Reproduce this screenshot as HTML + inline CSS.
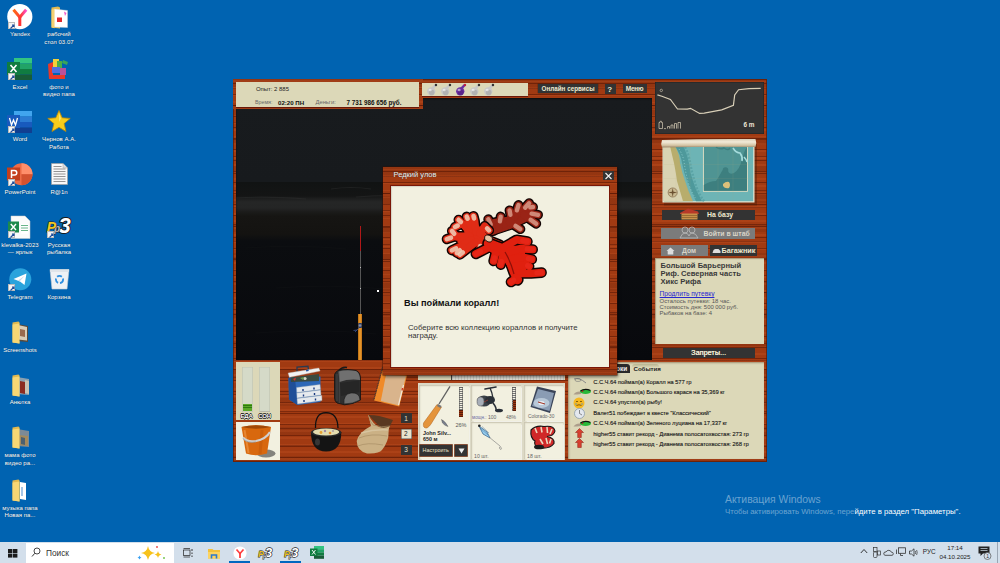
<!DOCTYPE html>
<html><head><meta charset="utf-8">
<style>
*{margin:0;padding:0;box-sizing:border-box}
html,body{width:1000px;height:563px;overflow:hidden}
body{background:#0063b1;font-family:"Liberation Sans",sans-serif;position:relative}
.a{position:absolute}
svg.a{overflow:visible}
.wood{background-color:#a13a12;background-image:repeating-linear-gradient(180deg,transparent 0 4px,rgba(75,15,0,.5) 4px 5.2px,transparent 5.2px 11px),repeating-linear-gradient(180deg,transparent 0 1.5px,rgba(235,110,55,.14) 1.5px 3.3px,transparent 3.3px 7px),repeating-linear-gradient(180deg,transparent 0 9px,rgba(60,10,0,.35) 9px 10.3px,transparent 10.3px 17px),repeating-linear-gradient(180deg,rgba(0,0,0,.08) 0 8px,transparent 8px 29px);}
.lbl{position:absolute;width:60px;text-align:center;color:#fff;font-size:6.05px;line-height:7.5px;white-space:nowrap;text-shadow:0 0 1px rgba(0,0,0,.5)}
</style></head><body>
<svg class="a" style="left:7px;top:3.5px" width="26" height="26" viewBox="0 0 26 26"><circle cx="12.8" cy="12.7" r="12.6" fill="#fff"/><defs><linearGradient id="yg" x1="0" y1="0" x2="1" y2="0"><stop offset="0" stop-color="#ff6a13"/><stop offset="0.6" stop-color="#ff3d3d"/><stop offset="1" stop-color="#ff4fd0"/></linearGradient></defs><path d="M6.5 5.8 L12.8 13.2 L19.2 5.8" stroke="url(#yg)" stroke-width="3" fill="none" stroke-linecap="butt"/><path d="M12.8 12.5 V22" stroke="#ff3535" stroke-width="3"/></svg><div class="a" style="left:7.5px;top:22px;width:7px;height:7px;background:#f4f4f4;border:0.5px solid #bbb"><svg width="7" height="7" viewBox="0 0 7 7" style="position:absolute;left:0;top:0"><path d="M1.5 5.5 L5 2 M3 2 H5 V4" stroke="#1f4e9a" stroke-width="1.1" fill="none"/></svg></div><div class="lbl" style="left:-10px;top:31.2px">Yandex</div><svg class="a" style="left:7px;top:58px" width="26" height="22" viewBox="0 0 26 22"><rect x="7" y="0" width="18" height="5.5" fill="#33c481"/><rect x="7" y="5.5" width="18" height="5.5" fill="#21a366"/><rect x="7" y="11" width="18" height="5.5" fill="#107c41"/><rect x="7" y="16.5" width="18" height="5.5" fill="#185c37"/><rect x="0" y="4" width="13" height="13" fill="#107c41"/><path d="M3.5 7 L9.5 14 M9.5 7 L3.5 14" stroke="#fff" stroke-width="1.6"/></svg><div class="a" style="left:7.5px;top:73px;width:7px;height:7px;background:#f4f4f4;border:0.5px solid #bbb"><svg width="7" height="7" viewBox="0 0 7 7" style="position:absolute;left:0;top:0"><path d="M1.5 5.5 L5 2 M3 2 H5 V4" stroke="#1f4e9a" stroke-width="1.1" fill="none"/></svg></div><div class="lbl" style="left:-10px;top:83.8px">Excel</div><svg class="a" style="left:7px;top:110.5px" width="26" height="22" viewBox="0 0 26 22"><rect x="7" y="0" width="18" height="5.5" fill="#41a5ee"/><rect x="7" y="5.5" width="18" height="5.5" fill="#2b7cd3"/><rect x="7" y="11" width="18" height="5.5" fill="#185abd"/><rect x="7" y="16.5" width="18" height="5.5" fill="#103f91"/><rect x="0" y="4" width="13" height="13" fill="#185abd"/><path d="M2.5 7 L4.5 14 L6.5 9 L8.5 14 L10.5 7" stroke="#fff" stroke-width="1.3" fill="none"/></svg><div class="a" style="left:7.5px;top:126px;width:7px;height:7px;background:#f4f4f4;border:0.5px solid #bbb"><svg width="7" height="7" viewBox="0 0 7 7" style="position:absolute;left:0;top:0"><path d="M1.5 5.5 L5 2 M3 2 H5 V4" stroke="#1f4e9a" stroke-width="1.1" fill="none"/></svg></div><div class="lbl" style="left:-10px;top:136.4px">Word</div><svg class="a" style="left:7px;top:163px" width="26" height="23" viewBox="0 0 26 23"><circle cx="14.5" cy="11.3" r="11" fill="#ed6c47"/><path d="M14.5 0.3 A11 11 0 0 1 25.5 11.3 H14.5Z" fill="#ff8f6b"/><path d="M14.5 11.3 H25.5 A11 11 0 0 1 14.5 22.3Z" fill="#d35230"/><rect x="0" y="4.5" width="13" height="13" fill="#c43e1c"/><path d="M4.5 15 V7.5 H7.5 A2.2 2.2 0 0 1 7.5 12 H4.5" stroke="#fff" stroke-width="1.5" fill="none"/></svg><div class="a" style="left:7.5px;top:179px;width:7px;height:7px;background:#f4f4f4;border:0.5px solid #bbb"><svg width="7" height="7" viewBox="0 0 7 7" style="position:absolute;left:0;top:0"><path d="M1.5 5.5 L5 2 M3 2 H5 V4" stroke="#1f4e9a" stroke-width="1.1" fill="none"/></svg></div><div class="lbl" style="left:-10px;top:189.0px">PowerPoint</div><svg class="a" style="left:7px;top:215.5px" width="26" height="23" viewBox="0 0 26 23"><path d="M4 0 H18 L23 5 V22.5 H4 Z" fill="#fbfbfb" stroke="#c8c8c8" stroke-width="0.5"/><rect x="14" y="8" width="7" height="10" fill="#fff"/><path d="M14 9.5 H21 M14 12 H21 M14 14.5 H21" stroke="#6ab48a" stroke-width="1"/><rect x="1" y="5.5" width="11" height="11" fill="#1d8a4b"/><path d="M3.8 8 L9 14 M9 8 L3.8 14" stroke="#fff" stroke-width="1.4"/></svg><div class="a" style="left:7.5px;top:231px;width:7px;height:7px;background:#f4f4f4;border:0.5px solid #bbb"><svg width="7" height="7" viewBox="0 0 7 7" style="position:absolute;left:0;top:0"><path d="M1.5 5.5 L5 2 M3 2 H5 V4" stroke="#1f4e9a" stroke-width="1.1" fill="none"/></svg></div><div class="lbl" style="left:-10px;top:241.6px">klevalka-2023</div><div class="lbl" style="left:-10px;top:249.1px">— ярлык</div><svg class="a" style="left:9px;top:268px" width="23" height="23" viewBox="0 0 23 23"><circle cx="11.3" cy="11.3" r="11" fill="#2aa3dc"/><path d="M4.5 11 L17.5 5.5 L15.5 17 L11 13.5 Z" fill="#fff"/><path d="M9 12.5 L16 7.5 L10.5 13.5 Z" fill="#c8daea"/></svg><div class="a" style="left:7.5px;top:284px;width:7px;height:7px;background:#f4f4f4;border:0.5px solid #bbb"><svg width="7" height="7" viewBox="0 0 7 7" style="position:absolute;left:0;top:0"><path d="M1.5 5.5 L5 2 M3 2 H5 V4" stroke="#1f4e9a" stroke-width="1.1" fill="none"/></svg></div><div class="lbl" style="left:-10px;top:294.2px">Telegram</div><svg class="a" style="left:11.5px;top:321px" width="18" height="23" viewBox="0 0 18 23"><path d="M0.5 1.5 L6.5 0.5 L7.5 1.5 L7.5 22.5 L0.5 21.5 Z" fill="#e2b94f"/><path d="M5 3 L16 5 L16 21 L5 20Z" fill="#5b4a3a"/><path d="M6 4 L15 6 L15 19.5 L6 18.5Z" fill="#d9cdb8"/><path d="M8 8 L13 9 L13 16 L8 15Z" fill="#9a6a4e"/><path d="M0.5 21.5 L7.5 22.5 L7.5 2.5 L0.5 3.5 Z" fill="#f7d774"/></svg><div class="lbl" style="left:-10px;top:346.8px">Screenshots</div><svg class="a" style="left:11.5px;top:373.5px" width="18" height="23" viewBox="0 0 18 23"><path d="M0.5 1.5 L6.5 0.5 L7.5 1.5 L7.5 22.5 L0.5 21.5 Z" fill="#e2b94f"/><path d="M5 3 L17 5 L17 21 L5 20Z" fill="#8aa0b0"/><path d="M8 7 L13 8 L13 20 L8 19Z" fill="#8b2b22"/><path d="M13 6 L17 7 L17 20 L13 19Z" fill="#c9c2b4"/><path d="M0.5 21.5 L7.5 22.5 L7.5 2.5 L0.5 3.5 Z" fill="#f7d774"/></svg><div class="lbl" style="left:-10px;top:399.4px">Анютка</div><svg class="a" style="left:11.5px;top:426px" width="18" height="23" viewBox="0 0 18 23"><path d="M0.5 1.5 L6.5 0.5 L7.5 1.5 L7.5 22.5 L0.5 21.5 Z" fill="#e2b94f"/><path d="M5 3 L17 5 L17 21 L5 20Z" fill="#7d8a96"/><path d="M6 9 L16 10 L16 20 L6 19Z" fill="#a58a5c"/><path d="M9 11 L13 12 L13 19 L9 18Z" fill="#4c6070"/><path d="M0.5 21.5 L7.5 22.5 L7.5 2.5 L0.5 3.5 Z" fill="#f7d774"/></svg><div class="lbl" style="left:-10px;top:452.0px">мама фото</div><div class="lbl" style="left:-10px;top:459.5px">видео ра...</div><svg class="a" style="left:11.5px;top:479px" width="18" height="23" viewBox="0 0 18 23"><path d="M0.5 1.5 L6.5 0.5 L7.5 1.5 L7.5 22.5 L0.5 21.5 Z" fill="#e2b94f"/><path d="M8 3 L14 4 L14 21 L8 20Z" fill="#fff"/><path d="M10 8 V17" stroke="#6aa0d8" stroke-width="1.2"/><path d="M0.5 21.5 L7.5 22.5 L7.5 2.5 L0.5 3.5 Z" fill="#f7d774"/></svg><div class="lbl" style="left:-10px;top:504.6px">музыка папа</div><div class="lbl" style="left:-10px;top:512.1px">Новая па...</div><svg class="a" style="left:51px;top:5.5px" width="18" height="23" viewBox="0 0 18 23"><path d="M0.5 1.5 L7 0.5 L9 1.5 L9 22.5 L0.5 21.5 Z" fill="#e2b94f"/><path d="M3 3 L16.5 4.5 L16.5 21.5 L3 21Z" fill="#fff" stroke="#d8d8d8" stroke-width="0.4"/><rect x="6" y="11.5" width="5" height="4.5" fill="#e0282e"/><path d="M13 5.5 L15.5 7 L14 10Z" fill="#f05ac8"/><path d="M0.5 21.5 L3.5 22.3 L3.5 3 L0.5 3.5 Z" fill="#f4d070"/></svg><div class="lbl" style="left:29px;top:31.2px">рабочий</div><div class="lbl" style="left:29px;top:38.7px">стол 03.07</div><svg class="a" style="left:47px;top:58px" width="24" height="22" viewBox="0 0 24 22"><path d="M1 6 L6 4 L6 17 L18 17 L18 21 L2 21Z" fill="#e8392a"/><rect x="6" y="1" width="6" height="8" fill="#f2d23a"/><rect x="10" y="3" width="5" height="7" fill="#4aae48"/><rect x="5" y="9" width="8" height="6" fill="#4f6fe0"/><rect x="13" y="10" width="6" height="7" fill="#b9519b"/><path d="M16 2 L21 4 L20 7 L15 5Z" fill="#39a55a"/></svg><div class="lbl" style="left:29px;top:83.8px">фото и</div><div class="lbl" style="left:29px;top:91.3px">видео папа</div><svg class="a" style="left:47px;top:110px" width="24" height="23" viewBox="0 0 24 23"><path d="M12 0.5 L15.2 7.8 L23.2 8.4 L17.1 13.6 L19 21.5 L12 17.3 L5 21.5 L6.9 13.6 L0.8 8.4 L8.8 7.8Z" fill="#f7cd1c" stroke="#b8860b" stroke-width="0.8"/><path d="M12 3 L14 8.5 L12 12 Z" fill="#fff3a0" opacity="0.6"/></svg><div class="lbl" style="left:29px;top:136.4px">Чернов А.А.</div><div class="lbl" style="left:29px;top:143.9px">Работа</div><svg class="a" style="left:51px;top:163px" width="17" height="22" viewBox="0 0 17 22"><path d="M0.5 0.5 H12 L16.5 5 V21.5 H0.5Z" fill="#f8f8f8" stroke="#a0a0a0" stroke-width="0.7"/><path d="M12 0.5 V5 H16.5" fill="#ddd" stroke="#a0a0a0" stroke-width="0.5"/><path d="M2.5 3.5 H10.5 M2.5 6 H14.5 M2.5 8.5 H14.5 M2.5 11 H14.5 M2.5 13.5 H14.5 M2.5 16 H14.5 M2.5 18.5 H14.5" stroke="#888" stroke-width="0.9"/></svg><div class="lbl" style="left:29px;top:189.0px">R@1n</div><svg class="a" style="left:46px;top:214px" width="27" height="25" viewBox="0 0 27 25"><text x="18.5" y="19" text-anchor="middle" font-family="Liberation Sans" font-weight="bold" font-style="italic" font-size="22" fill="#fff" stroke="#1a1a1a" stroke-width="2" paint-order="stroke">3</text><text x="8" y="18" font-family="Liberation Sans" font-weight="bold" font-style="italic" font-size="10" fill="#bdbdbd" stroke="#222" stroke-width="1" paint-order="stroke">р</text><text x="0.8" y="18" font-family="Liberation Sans" font-weight="bold" font-style="italic" font-size="14" fill="#f0c820" stroke="#222" stroke-width="1" paint-order="stroke">Р</text></svg><div class="a" style="left:47px;top:231px;width:7px;height:7px;background:#f4f4f4;border:0.5px solid #bbb"><svg width="7" height="7" viewBox="0 0 7 7" style="position:absolute;left:0;top:0"><path d="M1.5 5.5 L5 2 M3 2 H5 V4" stroke="#1f4e9a" stroke-width="1.1" fill="none"/></svg></div><div class="lbl" style="left:29px;top:241.6px">Русская</div><div class="lbl" style="left:29px;top:249.1px">рыбалка</div><svg class="a" style="left:49px;top:268px" width="21" height="22" viewBox="0 0 21 22"><path d="M1 1.5 H20 L18 21 H3Z" fill="#eef2f5" stroke="#c5cdd4" stroke-width="0.6"/><path d="M1 1.5 H20 L19.7 4 H1.3Z" fill="#dfe5ea"/><circle cx="10.5" cy="11.5" r="3.6" fill="none" stroke="#2d8fe0" stroke-width="1.8" stroke-dasharray="5 2"/></svg><div class="lbl" style="left:29px;top:294.2px">Корзина</div><div class="a" style="left:0;top:542px;width:1000px;height:21px;background:#d3dfeb"></div><svg class="a" style="left:8px;top:548.5px" width="10" height="9" viewBox="0 0 10 9"><rect x="0" y="0" width="4.4" height="4" fill="#1b1b1b"/><rect x="5" y="0" width="4.4" height="4" fill="#1b1b1b"/><rect x="0" y="4.6" width="4.4" height="4" fill="#1b1b1b"/><rect x="5" y="4.6" width="4.4" height="4" fill="#1b1b1b"/></svg><div class="a" style="left:26px;top:542.5px;width:148px;height:20.5px;background:#fff"></div><svg class="a" style="left:31px;top:547px" width="10" height="11" viewBox="0 0 10 11"><circle cx="6" cy="4" r="3" fill="none" stroke="#333" stroke-width="0.9"/><path d="M3.8 6.3 L1 9.5" stroke="#333" stroke-width="1"/></svg><div class="a" style="left:46px;top:547.5px;font-size:8.3px;line-height:10px;color:#333">Поиск</div><svg class="a" style="left:137px;top:544px" width="34" height="18" viewBox="0 0 34 18"><path d="M11 2 Q12 8 18 9 Q12 10 11 16 Q10 10 4 9 Q10 8 11 2Z" fill="#f7c21c"/><path d="M21 7 Q21.5 10 24.5 10.5 Q21.5 11 21 14 Q20.5 11 17.5 10.5 Q20.5 10 21 7Z" fill="#f7c21c"/><path d="M2.5 11.5 Q3 13.3 4.5 13.5 Q3 13.8 2.5 15.5 Q2 13.8 0.5 13.5 Q2 13.3 2.5 11.5Z" fill="#3aa0f0"/><circle cx="20" cy="3" r="0.9" fill="#e84040"/><circle cx="27" cy="14" r="0.9" fill="#6cc040"/></svg><svg class="a" style="left:182.5px;top:548px" width="10" height="10" viewBox="0 0 10 10"><rect x="0.5" y="2" width="6.5" height="5.5" fill="none" stroke="#222" stroke-width="0.7"/><path d="M0.5 0.5 H7 M0.5 9 H7" stroke="#222" stroke-width="0.7"/><path d="M9 1 V3 M9 4.5 V6 M9 7.5 V9" stroke="#222" stroke-width="0.9"/></svg><svg class="a" style="left:208px;top:547.5px" width="12" height="11" viewBox="0 0 12 11"><path d="M0 1 H4.5 L5.5 2 H12 V10.5 H0Z" fill="#f3c13a"/><rect x="0" y="4" width="12" height="6.5" fill="#fcd462"/><path d="M3.5 10.5 V7 H8.5 V10.5" stroke="#2a78d0" stroke-width="1.6" fill="none"/></svg><svg class="a" style="left:233px;top:545.5px" width="14" height="14" viewBox="0 0 14 14"><circle cx="7" cy="7" r="6.6" fill="#fff"/><path d="M3.5 3.5 L7 7.5 L10.5 3.5" stroke="#ff4040" stroke-width="1.7" fill="none"/><path d="M7 7 V12" stroke="#ff3535" stroke-width="1.7"/></svg><div class="a" style="left:229px;top:561px;width:21px;height:2px;background:#0067c0"></div><svg class="a" style="left:258px;top:545px" width="16" height="14" viewBox="0 0 16 14"><text x="10.5" y="11.5" text-anchor="middle" font-family="Liberation Sans" font-weight="bold" font-style="italic" font-size="13" fill="#fff" stroke="#222" stroke-width="1.3" paint-order="stroke">3</text><text x="5" y="11.5" font-family="Liberation Sans" font-weight="bold" font-style="italic" font-size="6.5" fill="#c8c8c8" stroke="#222" stroke-width="0.8" paint-order="stroke">р</text><text x="0.3" y="11.5" font-family="Liberation Sans" font-weight="bold" font-style="italic" font-size="8.5" fill="#e8c020" stroke="#222" stroke-width="0.8" paint-order="stroke">Р</text></svg><svg class="a" style="left:283.5px;top:545px" width="16" height="14" viewBox="0 0 16 14"><text x="10.5" y="11.5" text-anchor="middle" font-family="Liberation Sans" font-weight="bold" font-style="italic" font-size="13" fill="#fff" stroke="#222" stroke-width="1.3" paint-order="stroke">3</text><text x="5" y="11.5" font-family="Liberation Sans" font-weight="bold" font-style="italic" font-size="6.5" fill="#c8c8c8" stroke="#222" stroke-width="0.8" paint-order="stroke">р</text><text x="0.3" y="11.5" font-family="Liberation Sans" font-weight="bold" font-style="italic" font-size="8.5" fill="#e8c020" stroke="#222" stroke-width="0.8" paint-order="stroke">Р</text></svg><div class="a" style="left:280px;top:561px;width:21px;height:2px;background:#0067c0"></div><svg class="a" style="left:309.5px;top:546px" width="14" height="13" viewBox="0 0 14 13"><rect x="4" y="0" width="10" height="3.2" fill="#33c481"/><rect x="4" y="3.2" width="10" height="3.2" fill="#21a366"/><rect x="4" y="6.4" width="10" height="3.2" fill="#107c41"/><rect x="4" y="9.6" width="10" height="3.2" fill="#185c37"/><rect x="0" y="2.5" width="7.5" height="7.5" fill="#107c41"/><path d="M2 4 L5.5 8.5 M5.5 4 L2 8.5" stroke="#fff" stroke-width="0.9"/></svg><svg class="a" style="left:859.5px;top:548px" width="8" height="6" viewBox="0 0 8 6"><path d="M0.8 5 L4 1.5 L7.2 5" stroke="#222" stroke-width="0.9" fill="none"/></svg><svg class="a" style="left:872.5px;top:546.5px" width="8" height="12" viewBox="0 0 8 12"><rect x="0.5" y="0.5" width="3.5" height="4" fill="none" stroke="#333" stroke-width="0.7"/><rect x="0.5" y="5" width="3.5" height="5.5" rx="1" fill="none" stroke="#333" stroke-width="0.7"/><rect x="4.5" y="4" width="3" height="4" fill="none" stroke="#333" stroke-width="0.7"/></svg><svg class="a" style="left:884px;top:548.5px" width="9" height="7" viewBox="0 0 9 7"><path d="M1 6.3 H8 A1.5 1.5 0 0 0 7.5 3.3 A3 3 0 0 0 2 3 A1.7 1.7 0 0 0 1 6.3Z" fill="none" stroke="#333" stroke-width="0.8"/></svg><svg class="a" style="left:896px;top:547px" width="10" height="10" viewBox="0 0 10 10"><rect x="2.5" y="0.8" width="7" height="5.5" fill="none" stroke="#333" stroke-width="0.8"/><path d="M0.5 2.5 V7 M4.5 6.5 V8.5 H7" stroke="#333" stroke-width="0.8" fill="none"/></svg><svg class="a" style="left:909px;top:547.5px" width="9" height="9" viewBox="0 0 9 9"><path d="M0.5 3 H2.5 L5 0.8 V8.2 L2.5 6 H0.5Z" fill="none" stroke="#333" stroke-width="0.8"/><path d="M6.3 3 Q7 4.5 6.3 6 M7.6 2 Q8.8 4.5 7.6 7" stroke="#333" stroke-width="0.7" fill="none"/></svg><div class="a" style="left:922.8px;top:548.2px;font-size:6.4px;line-height:8px;color:#222">РУС</div><div class="a" style="left:938px;top:544.3px;width:34px;text-align:center;font-size:6.2px;line-height:8.8px;color:#222">17:14<br>04.10.2025</div><svg class="a" style="left:978px;top:546px" width="14" height="14" viewBox="0 0 14 14"><path d="M0.5 0.5 H11.5 V7.5 H5 L2.5 10 V7.5 H0.5Z" fill="#222"/><path d="M2.5 2.5 H9.5 M2.5 4.5 H9.5" stroke="#d3dfeb" stroke-width="0.7"/><circle cx="9.5" cy="10" r="3.5" fill="#d3dfeb" stroke="#555" stroke-width="0.7"/><text x="8.3" y="12" font-size="5" font-family="Liberation Sans" fill="#333">1</text></svg><div class="a" style="left:997px;top:542px;width:1px;height:21px;background:#9aa6b4"></div><div class="a" style="left:725px;top:493.5px;font-size:10.4px;line-height:12px;color:rgba(255,255,255,.42);white-space:nowrap">Активация Windows</div><div class="a" style="left:725px;top:506.5px;font-size:7.8px;line-height:9px;color:rgba(255,255,255,.42);white-space:nowrap">Чтобы активировать Windows, пере<span style="color:#fff">йдите в раздел "Параметры".</span></div><div class="a wood" style="left:233px;top:79px;width:534px;height:383px;"></div><div class="a " style="left:233px;top:79px;width:534px;height:383px;box-shadow:inset 0 0 0 1px rgba(90,25,5,.7)"></div><div class="a " style="left:236px;top:98px;width:416px;height:262px;background:linear-gradient(180deg,#181b1e 0px,#171a1d 84px,#111313 84.5px,#141515 98px,#1e1f1f 101px,#252626 104px,#242525 110px,#1b1b1a 114px,#161513 118px,#141311 136px,#0b0d10 143px,#08090d 262px)"></div><svg class="a" style="left:236px;top:98px" width="416" height="262" viewBox="0 0 416 262"><g fill="none" stroke="#333434" stroke-width="1.2" opacity="0.4"><path d="M95 91 Q115 88 135 91"/><path d="M250 90 Q270 87 300 90"/><path d="M320 89 Q340 87 370 90"/><path d="M0 100 Q30 98 70 101"/><path d="M120 99 Q160 96 210 100"/><path d="M260 98 Q300 95 360 99"/></g><g fill="none" stroke="#141618" stroke-width="1" opacity="0.35"><path d="M10 150 Q60 146 110 151"/><path d="M150 165 Q200 160 260 166"/><path d="M40 190 Q90 186 150 191"/><path d="M200 210 Q260 205 320 211"/><path d="M20 235 Q80 230 140 236"/></g></svg><div class="a " style="left:236px;top:98px;width:416px;height:262px;box-shadow:inset 0 1px 2px rgba(0,0,0,.6)"></div><div class="a " style="left:359.5px;top:225.5px;width:1.6px;height:26px;background:#b01818"></div><div class="a " style="left:359.7px;top:251px;width:1.1px;height:64px;background:#555"></div><div class="a " style="left:359.8px;top:267px;width:1px;height:1px;background:#bbb"></div><div class="a " style="left:359.8px;top:288px;width:1px;height:1px;background:#bbb"></div><div class="a " style="left:358.2px;top:314px;width:3.8px;height:46px;background:linear-gradient(90deg,#b86a10,#f0a030,#c07018)"></div><svg class="a" style="left:352px;top:320px" width="14" height="16" viewBox="0 0 14 16"><rect x="6.3" y="3" width="3.5" height="5" fill="#2a3a60"/><circle cx="8" cy="5.5" r="1.3" fill="#8090b0"/><path d="M7 8 L3 12 M5 10 L1.5 10.5" stroke="#3a5090" stroke-width="0.8"/></svg><div class="a " style="left:377px;top:289.5px;width:2px;height:2px;background:#fff"></div><div class="a wood" style="left:233px;top:79px;width:189.5px;height:30.3px;"></div><div class="a " style="left:236px;top:82px;width:183px;height:24.5px;background:#dcd8b8;box-shadow:0 1px 0 #6a1808"></div><div class="a" style="left:256px;top:85.5px;white-space:nowrap;font-size:5.95px;line-height:7px;color:#222">Опыт: 2 885</div><div class="a" style="left:255px;top:99px;white-space:nowrap;font-size:5.3px;line-height:7px;color:#666">Время:</div><div class="a" style="left:278px;top:98.5px;white-space:nowrap;font-size:6.1px;line-height:7px;color:#111;font-weight:bold">02:20 ПН</div><div class="a" style="left:315.5px;top:99px;white-space:nowrap;font-size:5.8px;line-height:7px;color:#666">Деньги:</div><div class="a" style="left:346.5px;top:98.5px;white-space:nowrap;font-size:6.3px;line-height:7px;color:#111;font-weight:bold">7 731 986 656 руб.</div><div class="a " style="left:422px;top:82.5px;width:106px;height:13.5px;background:#dcd8b8;box-shadow:0 1px 0 #6a1808"></div><svg class="a" style="left:425.5px;top:83px" width="12.5" height="13.5" viewBox="0 0 11 12"><path d="M5.5 5 L8.3 2" stroke="#c8c8c8" stroke-width="2.2" stroke-linecap="round"/><circle cx="4.6" cy="7.4" r="3.7" fill="#c8c8c8"/><circle cx="5" cy="8.4" r="2.5" fill="#8a8a8a" opacity="0.35"/><circle cx="8.8" cy="1.7" r="1.1" fill="#333"/><ellipse cx="3.6" cy="6.2" rx="1.4" ry="1.1" fill="#fff" opacity="0.55"/></svg><svg class="a" style="left:440.0px;top:83px" width="12.5" height="13.5" viewBox="0 0 11 12"><path d="M5.5 5 L8.3 2" stroke="#c8c8c8" stroke-width="2.2" stroke-linecap="round"/><circle cx="4.6" cy="7.4" r="3.7" fill="#c8c8c8"/><circle cx="5" cy="8.4" r="2.5" fill="#8a8a8a" opacity="0.35"/><circle cx="8.8" cy="1.7" r="1.1" fill="#333"/><ellipse cx="3.6" cy="6.2" rx="1.4" ry="1.1" fill="#fff" opacity="0.55"/></svg><svg class="a" style="left:454.5px;top:83px" width="12.5" height="13.5" viewBox="0 0 11 12"><path d="M5.5 5 L8.3 2" stroke="#6a2fa0" stroke-width="2.2" stroke-linecap="round"/><circle cx="4.6" cy="7.4" r="3.7" fill="#6a2fa0"/><circle cx="5" cy="8.4" r="2.5" fill="#3a1060" opacity="0.35"/><circle cx="8.8" cy="1.7" r="1.1" fill="#c02040"/><ellipse cx="3.6" cy="6.2" rx="1.4" ry="1.1" fill="#fff" opacity="0.55"/></svg><svg class="a" style="left:468.5px;top:83px" width="12.5" height="13.5" viewBox="0 0 11 12"><path d="M5.5 5 L8.3 2" stroke="#c8c8c8" stroke-width="2.2" stroke-linecap="round"/><circle cx="4.6" cy="7.4" r="3.7" fill="#c8c8c8"/><circle cx="5" cy="8.4" r="2.5" fill="#8a8a8a" opacity="0.35"/><circle cx="8.8" cy="1.7" r="1.1" fill="#333"/><ellipse cx="3.6" cy="6.2" rx="1.4" ry="1.1" fill="#fff" opacity="0.55"/></svg><svg class="a" style="left:482.5px;top:83px" width="12.5" height="13.5" viewBox="0 0 11 12"><path d="M5.5 5 L8.3 2" stroke="#c8c8c8" stroke-width="2.2" stroke-linecap="round"/><circle cx="4.6" cy="7.4" r="3.7" fill="#c8c8c8"/><circle cx="5" cy="8.4" r="2.5" fill="#8a8a8a" opacity="0.35"/><circle cx="8.8" cy="1.7" r="1.1" fill="#333"/><ellipse cx="3.6" cy="6.2" rx="1.4" ry="1.1" fill="#fff" opacity="0.55"/></svg><div class="a " style="left:538px;top:83.5px;width:60px;height:9.5px;background:#333;box-shadow:0 0 1px #111"></div><div class="a" style="left:541.5px;top:84.5px;white-space:nowrap;font-size:6.3px;line-height:8px;color:#f0ead0;font-weight:bold">Онлайн сервисы</div><div class="a " style="left:604.5px;top:84px;width:11px;height:9.5px;background:#333"></div><div class="a" style="left:607.3px;top:84.5px;white-space:nowrap;font-size:8px;line-height:9px;color:#f0ead0;font-weight:bold">?</div><div class="a " style="left:623px;top:83.5px;width:23.5px;height:9.5px;background:#333"></div><div class="a" style="left:625.8px;top:84.5px;white-space:nowrap;font-size:6.5px;line-height:8px;color:#f0ead0;font-weight:bold;letter-spacing:-0.25px">Меню</div><div class="a " style="left:655px;top:82px;width:109px;height:52px;background:#333;box-shadow:inset 0 0 0 0.5px #222"></div><svg class="a" style="left:655px;top:82px" width="109" height="52" viewBox="655 82 109 52"><polyline points="657.4,94.9 661.9,96.2 670.4,99.5 672.3,102 677.5,109 687.3,109.2 690.5,108.3 699.6,113.4 704.2,113.1 721.7,109.9 733.4,105.3 734.7,94.9 738.6,89.7 749,88.7 760.7,88.4" fill="none" stroke="#d8cfb8" stroke-width="1.2"/><circle cx="661.3" cy="90.4" r="1.2" fill="none" stroke="#d8cfb8" stroke-width="0.6"/><path d="M659 128.5 V122.5 H660 V121.3 H661.5 V122.5 H662.5 V128.5Z" fill="none" stroke="#d8cfb8" stroke-width="0.7"/><path d="M664 128.6 H666 M667.5 128.6 V126.5 H669.5 V128.6 M671 128.6 V125 H673 V128.6 M674.5 128.6 V123.5 H676.5 V128.6 M678 128.6 V122.5 H680.5 V128.6" fill="none" stroke="#d8cfb8" stroke-width="0.7"/><text x="743.5" y="126.5" font-family="Liberation Sans" font-weight="bold" font-size="6.4" fill="#f0e8d8">6 m</text></svg><svg class="a" style="left:658px;top:135px" width="102" height="72" viewBox="0 0 102 72"><rect x="5" y="7" width="93" height="62" fill="#3a1a08" opacity="0.35" transform="translate(1 1.5)"/><rect x="4.5" y="9" width="92" height="58.5" fill="#ede8d2"/><rect x="5.8" y="11" width="89.5" height="55.3" fill="#6db4b5"/><path d="M5.8 11 H17 Q22 20 22 28 Q24 38 27 46 Q30 56 35 66.3 H5.8Z" fill="#b8ad6c"/><path d="M5.8 11 H12 Q14 20 16 28 Q18 38 19 46 Q22 56 25 66.3 H5.8Z" fill="#d9d3b2"/><path d="M17 11 Q23 20 24 28 Q26 38 29 46 Q33 56 38 66.3 H44 Q38 56 35 46 Q32 38 31 28 Q29 18 25 11Z" fill="#4e999b"/><path d="M27 12 Q31 20 32 28 Q34 38 37 48 Q40 58 46 66.3" stroke="#5aa4a6" stroke-width="2.5" fill="none" stroke-dasharray="2 1.5"/><path d="M21 14 Q26 22 26.5 30 Q28 40 31 50 Q34 58 38 64" stroke="#9ad6d6" stroke-width="0.8" fill="none" stroke-dasharray="1 2"/><rect x="45.4" y="11" width="44" height="45.3" fill="#4f9493" stroke="#e6e0c4" stroke-width="0.9"/><path d="M45.8 55.8 V50 Q52 46 58 46 Q62 40 64 36 Q67 32 70 36 Q71 40 76 38 Q82 34 84 24 Q86 16 89 12 V55.8Z" fill="#3d7f7f"/><circle cx="67.5" cy="35" r="2.8" fill="#3d7f7f"/><path d="M65 49 Q68 46 71 47 Q73 50 71 53 Q67 54 65 51Z" fill="#dcc07a"/><path d="M75 13 Q78 18 82 18 Q85 22 84 26 M86 22 Q88 24 89 27" stroke="#a6dcdc" stroke-width="1.6" fill="none"/><path d="M58 12 Q62 15 66 13 Q70 16 72 13" stroke="#3d7f7f" stroke-width="1.5" fill="none"/><g stroke="#b9b080" stroke-width="0.3" opacity="0.35"><path d="M5.8 29.5 H95.3 M5.8 43.5 H95.3 M60 11 V66.3 M75 11 V66.3 M18 11 V66.3 M32 11 V66.3"/></g><circle cx="14.7" cy="57.5" r="4.6" fill="#c8b890" stroke="#7a6040" stroke-width="0.6"/><path d="M14.7 53 L15.6 57.5 L14.7 62 L13.8 57.5Z M10.2 57.5 L14.7 56.6 L19.2 57.5 L14.7 58.4Z" fill="#6a5030"/><defs><linearGradient id="roll" x1="0" y1="0" x2="0" y2="1"><stop offset="0" stop-color="#d8ccb4"/><stop offset="0.35" stop-color="#f2ead8"/><stop offset="0.75" stop-color="#d4c4a4"/><stop offset="1" stop-color="#9a8468"/></linearGradient></defs><path d="M4 5 Q50 3.5 97.5 4 Q99 8 97.5 12 Q50 11.5 4 12.5 Q2.5 8.5 4 5Z" fill="url(#roll)"/></svg><div class="a " style="left:662px;top:209.8px;width:93px;height:9.8px;background:#333"></div><svg class="a" style="left:679px;top:208px" width="21" height="12" viewBox="0 0 21 12"><path d="M1 5 L9 0.5 L19 3.5 L20 6 H1Z" fill="#b83828"/><rect x="2.5" y="5.5" width="16" height="6" fill="#c8904a"/><path d="M2.5 7.5 H18.5 M2.5 9.5 H18.5" stroke="#7a5020" stroke-width="0.6"/></svg><div class="a" style="left:707px;top:211px;white-space:nowrap;font-size:6.9px;line-height:8px;color:#f0ead0;font-weight:bold">На базу</div><div class="a " style="left:661px;top:227.7px;width:94px;height:11px;background:#7b7b7b"></div><svg class="a" style="left:679px;top:226px" width="20" height="13" viewBox="0 0 20 13"><circle cx="6" cy="4" r="3" fill="none" stroke="#bbb" stroke-width="0.8"/><circle cx="13" cy="4" r="3" fill="none" stroke="#bbb" stroke-width="0.8"/><path d="M1 12 Q3 7 6 7 Q9 7 10 10 Q11 7 13 7 Q17 7 19 12Z" fill="none" stroke="#bbb" stroke-width="0.8"/></svg><div class="a" style="left:703.5px;top:229.5px;white-space:nowrap;font-size:6.9px;line-height:8px;color:#d8d4c8;font-weight:bold">Войти в штаб</div><div class="a " style="left:660.8px;top:245px;width:47.2px;height:10.7px;background:#7b7b7b"></div><svg class="a" style="left:666px;top:246.5px" width="9" height="8" viewBox="0 0 9 8"><path d="M0.5 4 L4.5 0.5 L8.5 4 H7.3 V7.5 H1.7 V4Z" fill="#ddd"/></svg><div class="a" style="left:682px;top:247px;white-space:nowrap;font-size:6.8px;line-height:8px;color:#d8d4c8;font-weight:bold">Дом</div><div class="a " style="left:710.4px;top:245px;width:46.8px;height:10.7px;background:#333"></div><svg class="a" style="left:712px;top:247.5px" width="9" height="6" viewBox="0 0 9 6"><path d="M0.5 5 L1.5 2 L3 1 H6.5 L8.5 3 V5Z" fill="#ddd"/></svg><div class="a" style="left:721.4px;top:247px;white-space:nowrap;font-size:7.3px;line-height:8px;color:#f0ead0;font-weight:bold">Багажник</div><div class="a " style="left:655px;top:258px;width:109px;height:85.5px;background:#dcd8b8;box-shadow:inset 1px 1px 1px rgba(80,40,10,.35)"></div><div class="a" style="left:660.5px;top:261.5px;white-space:nowrap;font-size:7.6px;line-height:8.1px;color:#3a3a3a;font-weight:bold">Большой Барьерный<br>Риф. Северная часть<br>Хикс Рифа</div><div class="a" style="left:659.6px;top:290.3px;white-space:nowrap;font-size:6.6px;line-height:7px;color:#2828d0;text-decoration:underline">Продлить путевку</div><div class="a" style="left:659.6px;top:297.6px;white-space:nowrap;font-size:5.9px;line-height:6.05px;color:#555">Осталось путевки: 18 час.<br>Стоимость дня: 500 000 руб.<br>Рыбаков на базе: 4</div><div class="a " style="left:662.6px;top:348px;width:92.3px;height:9.7px;background:#333"></div><div class="a" style="left:691px;top:349.2px;white-space:nowrap;font-size:7.3px;line-height:8px;color:#f4eed8;text-shadow:0.3px 0 0 #f4eed8">Запреты...</div><div class="a " style="left:236px;top:362.2px;width:43.8px;height:57.5px;background:#dcd8b8"></div><div class="a " style="left:242.2px;top:367.3px;width:10.5px;height:44.7px;background:#d5dac8;box-shadow:inset 0 0 0 0.6px #c0c4b0"></div><div class="a " style="left:259px;top:367.3px;width:11px;height:44.7px;background:#d5dac8;box-shadow:inset 0 0 0 0.6px #c0c4b0"></div><div class="a " style="left:242.8px;top:403.7px;width:9.3px;height:7.3px;background:repeating-linear-gradient(180deg,#5aa828 0 1.2px,#2e7a10 1.2px 1.8px)"></div><div class="a " style="left:259.5px;top:410.5px;width:10px;height:1.5px;background:#b8b8a8"></div><div class="a" style="left:240.5px;top:412.6px;white-space:nowrap;font-size:6px;line-height:6.5px;color:#fff;font-weight:bold;letter-spacing:-0.2px;text-shadow:0.6px 0 0 #111,-0.6px 0 0 #111,0 0.6px 0 #111,0 -0.6px 0 #111">ЕДА</div><div class="a" style="left:258.3px;top:412.6px;white-space:nowrap;font-size:6px;line-height:6.5px;color:#fff;font-weight:bold;letter-spacing:-0.2px;text-shadow:0.6px 0 0 #111,-0.6px 0 0 #111,0 0.6px 0 #111,0 -0.6px 0 #111">СОН</div><div class="a " style="left:236px;top:422.4px;width:43.8px;height:37.3px;background:#f2f0e0"></div><svg class="a" style="left:236px;top:422px" width="44" height="38" viewBox="0 0 44 38"><ellipse cx="30" cy="31.5" rx="9.5" ry="4" fill="#3a3a3a" opacity="0.6"/><path d="M5.5 5 Q20 1.5 35 5 L31 31.5 Q20 35 10 31.5Z" fill="#d8680e"/><path d="M5.5 5 Q20 1.5 35 5 Q20 8.5 5.5 5Z" fill="#a04808"/><path d="M8.5 8 L12.5 31" stroke="#f4a050" stroke-width="2" opacity="0.55"/><path d="M26 8 L24 32" stroke="#b85008" stroke-width="3" opacity="0.4"/><path d="M7 15.5 Q11 20.5 20 19 Q30 17 34 10" stroke="#d0d0d0" stroke-width="2.2" fill="none"/><path d="M7 15.5 Q11 20.5 20 19" stroke="#888" stroke-width="0.6" fill="none" transform="translate(0 1)"/></svg><svg class="a" style="left:283px;top:362px" width="40" height="46" viewBox="0 0 40 46"><path d="M14 10 V5 L25 4.3 L25.6 8.5" stroke="#2a3a50" stroke-width="1.3" fill="none"/><path d="M5.5 15.8 L37.5 14.5 L37.5 40 L14.5 43 L6 37.5Z" fill="#2d68b8"/><path d="M5.5 15.8 L12 15.5 L14.5 43 L6 37.5Z" fill="#1f4f98"/><path d="M7.5 15.5 L36 12 L36 19 L8 20Z" fill="#3a4a40"/><path d="M10 17 L13 15.5 L12 19Z" fill="#d03030"/><circle cx="22" cy="16.5" r="1.6" fill="#d8d8c8"/><path d="M17 16 L21 15 L20 18Z" fill="#6a9a50"/><path d="M5.1 11.1 L35.8 6 L37.1 9 L6.4 15.3Z" fill="#f2f2f2" stroke="#b8b8b8" stroke-width="0.4"/><rect x="23" y="8" width="2.5" height="1.5" fill="#2050a0" transform="rotate(-9 23 8)"/><path d="M13.6 25.5 L37 22.5 L37.5 27.5 L13.8 30.5Z" fill="#e6eaee" stroke="#a0a8b0" stroke-width="0.4"/><path d="M13.8 31 L37.5 28 L38 33 L14 36Z" fill="#e6eaee" stroke="#a0a8b0" stroke-width="0.4"/><path d="M14 36.5 L38.8 33.5 L39 38.5 L14.5 42Z" fill="#e6eaee" stroke="#a0a8b0" stroke-width="0.4"/><path d="M20 27 V29 M31 25.5 V27.5 M20.5 32.5 V34.5 M31.5 31 V33 M21 38 V40 M32.5 36.5 V38.5" stroke="#1a3a80" stroke-width="1.4"/></svg><svg class="a" style="left:283px;top:362px" width="82" height="46" viewBox="0 0 82 46"><path d="M56 8.5 Q59 4.5 64 5.5" stroke="#1a1a1a" stroke-width="1.6" fill="none"/><path d="M51.5 12.5 Q53 8 60 7 L73 8.5 Q77.5 10 77.5 17 L77.5 38 Q70 42.5 61.5 42.8 L54 41 Q51.5 39 51.5 36Z" fill="#2e2e2e" stroke="#111" stroke-width="0.8"/><path d="M55.5 9.5 Q63 7.5 73 9 Q77 11 77 18 Q66 16.5 56.5 20Z" fill="#707070"/><path d="M57 21 L76.5 18.5 L76.5 30 L58 34Z" fill="#262626"/><path d="M61 42 Q60 32 68 31 Q76.5 30 77 38 Q70 42 61 42Z" fill="#6e6e6e" stroke="#1a1a1a" stroke-width="0.6"/><path d="M54 12 V39 M56.3 10.5 V41" stroke="#555" stroke-width="0.6"/></svg><svg class="a" style="left:365px;top:360px" width="46" height="50" viewBox="0 0 46 50"><path d="M17.6 10 L42 15.6 L34.2 46.5 L9 40.5Z" fill="#f08a28"/><path d="M21 15 L41 15.8 L34 45.5 L15.8 41Z" fill="#d9b48c"/><path d="M38.5 25 L33.5 45" stroke="#f4e8d8" stroke-width="1.2"/><path d="M37.6 28 L37 30.5" stroke="#d03020" stroke-width="1.2"/><path d="M17.6 6.8 L8.8 40" stroke="#3a3a3a" stroke-width="1.3" stroke-dasharray="0.8 0.9"/></svg><svg class="a" style="left:305px;top:405px" width="40" height="48" viewBox="0 0 40 48"><path d="M10.5 23 Q10 7.7 21 7.7 Q32.5 7.7 33 23" stroke="#111" stroke-width="1.3" fill="none"/><path d="M6 27 Q6 46.5 21 46.5 Q36.3 46.5 36.3 27Z" fill="#141414"/><ellipse cx="21.1" cy="27.3" rx="15.2" ry="4.4" fill="#2a2a2a"/><ellipse cx="21.1" cy="27" rx="13" ry="3.4" fill="#e4dcae"/><circle cx="16" cy="27.5" r="1.4" fill="#e8a030"/><circle cx="25" cy="28" r="1.3" fill="#e89030"/><circle cx="20" cy="26" r="1.2" fill="#a08aa8"/><circle cx="28" cy="26" r="1.1" fill="#b0a0a0"/><ellipse cx="12.5" cy="37" rx="2.5" ry="3.5" fill="#555" opacity="0.5"/></svg><svg class="a" style="left:305px;top:405px" width="90" height="50" viewBox="0 0 90 50"><path d="M63.3 9.9 Q75 10 88 15 L85 21 Q80 24 76 23Z" fill="#5a3820"/><path d="M63.3 9.9 L66 21 Q54 27 51.7 36 Q52 46 62 48.4 Q74 49 77 45 Q84 36 83.6 27 Q84 22 85 21 Q80 24 74 22 Q68 19 63.3 9.9Z" fill="#cbb185"/><path d="M63.3 9.9 Q65 17 68 20 Q76 23 85 21" stroke="#a08860" stroke-width="0.7" fill="none"/><path d="M54 33 Q66 28 82 31 M53 41 Q62 37 78 40" stroke="#9a8058" stroke-width="0.5" fill="none"/><path d="M56 28 Q70 24 83 25" stroke="#e0d0b0" stroke-width="1.5" fill="none" opacity="0.6"/></svg><div class="a " style="left:400.8px;top:413px;width:11px;height:10.3px;background:#333"></div><div class="a" style="left:404.3px;top:414.5px;white-space:nowrap;font-size:6.5px;line-height:7px;color:#e8e2cc">1</div><div class="a " style="left:400.8px;top:429px;width:11px;height:10px;background:#e8e4cc;box-shadow:inset 0 0 0 0.6px #555"></div><div class="a" style="left:404px;top:430.3px;white-space:nowrap;font-size:6.5px;line-height:7px;color:#222">2</div><div class="a " style="left:400.8px;top:444.8px;width:11px;height:10.3px;background:#333"></div><div class="a" style="left:404.3px;top:446.3px;white-space:nowrap;font-size:6.5px;line-height:7px;color:#e8e2cc">3</div><div class="a " style="left:418px;top:375px;width:147px;height:5.3px;background:#dcd8b8"></div><div class="a " style="left:450.5px;top:375.3px;width:113.5px;height:4.8px;background:repeating-linear-gradient(90deg,#c4c4bc 0 1px,#dadad2 1px 3px);border-left:1px solid #444"></div><div class="a " style="left:418px;top:383px;width:147px;height:76.5px;background:#dcd9c6"></div><div class="a " style="left:418.5px;top:384.5px;width:50px;height:74.5px;background:#f2f0e0;box-shadow:inset 1px 1px 1.5px rgba(120,110,80,.35), 0.5px 0.5px 1px rgba(255,255,255,.6)"></div><div class="a " style="left:471px;top:385.4px;width:50px;height:35.6px;background:#f2f0e0;box-shadow:inset 1px 1px 1.5px rgba(120,110,80,.35), 0.5px 0.5px 1px rgba(255,255,255,.6)"></div><div class="a " style="left:523.7px;top:385.4px;width:39px;height:35.6px;background:#f2f0e0;box-shadow:inset 1px 1px 1.5px rgba(120,110,80,.35), 0.5px 0.5px 1px rgba(255,255,255,.6)"></div><div class="a " style="left:471px;top:422.3px;width:50px;height:36.7px;background:#f2f0e0;box-shadow:inset 1px 1px 1.5px rgba(120,110,80,.35), 0.5px 0.5px 1px rgba(255,255,255,.6)"></div><div class="a " style="left:523.7px;top:422.3px;width:39px;height:36.7px;background:#f2f0e0;box-shadow:inset 1px 1px 1.5px rgba(120,110,80,.35), 0.5px 0.5px 1px rgba(255,255,255,.6)"></div><svg class="a" style="left:418px;top:383px" width="50" height="50" viewBox="0 0 50 50"><path d="M32 3.3 L21 21" stroke="#606060" stroke-width="1.3"/><path d="M19 21.5 L5.5 40 Q4.5 45.5 9 45 Q11.5 43.5 13 41 L23.5 24Z" fill="#e4943c" stroke="#b06018" stroke-width="0.5"/><path d="M19.5 22 L23 24" stroke="#777" stroke-width="2.2"/><path d="M23.5 36.5 Q27 38 30 43.5 Q27 43 24.5 40Z" fill="#7a8090" stroke="#444" stroke-width="0.4"/></svg><div class="a " style="left:458.5px;top:387px;width:4.5px;height:30px;background:repeating-linear-gradient(180deg,#777 0 0.7px,#f4f2e4 0.7px 2px);box-shadow:inset 0 0 0 0.6px #555"></div><div class="a " style="left:459px;top:410px;width:3.5px;height:7px;background:repeating-linear-gradient(180deg,#5a1a08 0 0.7px,#9a3810 0.7px 2px)"></div><div class="a" style="left:455.5px;top:421.5px;white-space:nowrap;font-size:5.5px;line-height:6px;color:#555">26%</div><div class="a" style="left:423px;top:430.8px;white-space:nowrap;font-size:5.4px;line-height:5.8px;color:#222;font-weight:bold">John Silv...<br>650 м</div><div class="a " style="left:419.8px;top:445.3px;width:32.2px;height:10.7px;background:#333;box-shadow:0 0 0 0.8px #6a2a10"></div><div class="a" style="left:422.5px;top:446.7px;white-space:nowrap;font-size:5.4px;line-height:7px;color:#f0ead0">Настроить</div><div class="a " style="left:455.3px;top:445.3px;width:11.9px;height:10.7px;background:#333;box-shadow:0 0 0 0.8px #6a2a10"></div><svg class="a" style="left:458px;top:447.5px" width="7" height="6" viewBox="0 0 7 6"><path d="M0.5 0.5 H6.5 L3.5 5.5Z" fill="#eee"/></svg><svg class="a" style="left:460px;top:378px" width="60" height="40" viewBox="0 0 60 40"><path d="M25 11 L36 9" stroke="#2a3038" stroke-width="1.6" stroke-linecap="round"/><path d="M30 10 Q32 14 33 20" stroke="#2a3038" stroke-width="1.4" fill="none"/><ellipse cx="24" cy="23" rx="7" ry="5.5" fill="#3a4048"/><ellipse cx="20.5" cy="23.5" rx="3.5" ry="4.5" fill="#a8aeb8" stroke="#555" stroke-width="0.5"/><ellipse cx="30" cy="22" rx="5" ry="4" fill="#2a3038"/><path d="M24 24 L28 22" stroke="#c04030" stroke-width="0.6"/><path d="M33 25 Q37 30 36 33" stroke="#2a3038" stroke-width="1.6" fill="none"/><ellipse cx="39" cy="32.5" rx="4" ry="1.8" fill="#2a3038"/></svg><div class="a " style="left:512px;top:387px;width:4px;height:24px;background:repeating-linear-gradient(180deg,#777 0 0.7px,#f4f2e4 0.7px 2px);box-shadow:inset 0 0 0 0.6px #555"></div><div class="a " style="left:512.5px;top:400px;width:3px;height:10.5px;background:repeating-linear-gradient(180deg,#5a1a08 0 0.7px,#9a3810 0.7px 2px)"></div><div class="a" style="left:472px;top:414.2px;white-space:nowrap;font-size:5px;line-height:6px;color:#666"><span style="font-size:4.6px;color:#6a6aa0">мощн.:</span> 100 &nbsp; &nbsp; &nbsp; 48%</div><svg class="a" style="left:529px;top:385px" width="29" height="29" viewBox="0 0 29 29"><path d="M8 1.5 L27 6 L21 28 L1.5 22Z" fill="#3a4458"/><path d="M9 4 L25 8 L20.5 26 L3 21Z" fill="#8a9cb4"/><ellipse cx="12.5" cy="18" rx="8" ry="5" fill="#b8c8d8"/><ellipse cx="12.5" cy="18" rx="3" ry="2" fill="#e8eef4"/><path d="M9 17 L16 19" stroke="#a03020" stroke-width="1"/></svg><div class="a" style="left:528px;top:414.2px;white-space:nowrap;font-size:4.8px;line-height:6px;color:#666">Colorado-30</div><svg class="a" style="left:477px;top:423px" width="28" height="28" viewBox="0 0 28 28"><path d="M2 3 L10 9 L13 15 L6 11Z" fill="#9ad0f0" stroke="#2a5a8a" stroke-width="0.7"/><path d="M3 5 L11 12 M5 3.5 L12 10" stroke="#2a5a8a" stroke-width="0.4"/><path d="M12 14 L23 23 Q25.5 26 24 26.5 Q22 26 22.5 24" stroke="#777" stroke-width="0.6" fill="none"/><circle cx="2.3" cy="2.8" r="1.3" fill="#222"/></svg><div class="a" style="left:474px;top:453.3px;white-space:nowrap;font-size:5.2px;line-height:6px;color:#666">10 шт.</div><svg class="a" style="left:528px;top:424px" width="30" height="28" viewBox="0 0 30 28"><path d="M3 6 Q8 1 16 2.5 Q26 1 27 7 Q26 12 19 12.5 Q27 14 26 19.5 Q22 25 12 24 Q5 22 7 17 Q2 14 3 6Z" fill="#d02828" stroke="#141414" stroke-width="1.1"/><path d="M7 4 L9 9 M13 3 L14 8.5 M19 3 L19.5 9 M24 5 L22 10 M12 15 L15 20 M18 14 L19.5 20 M23 15 L21.5 19.5" stroke="#ecd8c0" stroke-width="1.6"/><ellipse cx="11" cy="23" rx="5" ry="2.3" fill="#1c1c1c"/></svg><div class="a" style="left:527px;top:453.3px;white-space:nowrap;font-size:5.2px;line-height:6px;color:#666">18 шт.</div><div class="a " style="left:568.3px;top:362.2px;width:196px;height:97px;background:#dcd8b8;box-shadow:inset 1px 1px 2px rgba(80,40,10,.4)"></div><div class="a " style="left:600px;top:364.2px;width:29.6px;height:8.4px;background:#2a2a2a;border-radius:0 3px 0 0"></div><div class="a" style="left:616px;top:364.5px;white-space:nowrap;font-size:6.5px;line-height:7.5px;color:#eee;font-weight:bold">оки</div><div class="a " style="left:632px;top:364.2px;width:27.2px;height:8.4px;background:linear-gradient(180deg,#b8b490,#dcd8b8 40%);border-radius:3px 3px 0 0"></div><div class="a" style="left:633.5px;top:364.5px;white-space:nowrap;font-size:6.1px;line-height:7.5px;color:#222;font-weight:bold">События</div><div class="a" style="left:593.2px;top:378.5px;white-space:nowrap;font-size:5.7px;line-height:7px;color:#222;text-shadow:0.3px 0 0 rgba(30,30,30,.6)">С.С.Ч.64 поймал(а) Коралл на 577 гр</div><div class="a" style="left:593.2px;top:388.93px;white-space:nowrap;font-size:5.7px;line-height:7px;color:#222;text-shadow:0.3px 0 0 rgba(30,30,30,.6)">С.С.Ч.64 поймал(а) Большого карася на 35,369 кг</div><div class="a" style="left:593.2px;top:399.36px;white-space:nowrap;font-size:5.7px;line-height:7px;color:#222;text-shadow:0.3px 0 0 rgba(30,30,30,.6)">С.С.Ч.64 упустил(а) рыбу!</div><div class="a" style="left:593.2px;top:409.79px;white-space:nowrap;font-size:5.7px;line-height:7px;color:#222;text-shadow:0.3px 0 0 rgba(30,30,30,.6)">Валет51 побеждает в квесте "Классический"</div><div class="a" style="left:593.2px;top:420.22px;white-space:nowrap;font-size:5.7px;line-height:7px;color:#222;text-shadow:0.3px 0 0 rgba(30,30,30,.6)">С.С.Ч.64 поймал(а) Зеленого луциана на 17,337 кг</div><div class="a" style="left:593.2px;top:430.65px;white-space:nowrap;font-size:5.7px;line-height:7px;color:#222;text-shadow:0.3px 0 0 rgba(30,30,30,.6)">higher55 ставит рекорд - Дианема полосатохвостая: 273 гр</div><div class="a" style="left:593.2px;top:441.08px;white-space:nowrap;font-size:5.7px;line-height:7px;color:#222;text-shadow:0.3px 0 0 rgba(30,30,30,.6)">higher55 ставит рекорд - Дианема полосатохвостая: 268 гр</div><svg class="a" style="left:573px;top:377px" width="14" height="8" viewBox="0 0 14 8"><path d="M1 2 Q6 0 13 6" stroke="#888" stroke-width="1" fill="none"/><ellipse cx="5" cy="3" rx="3" ry="1.5" fill="none" stroke="#777" stroke-width="0.6"/></svg><svg class="a" style="left:573px;top:386px" width="19" height="11" viewBox="0 0 19 11"><path d="M0.5 8.5 Q3 5 7.5 5.5 L8 8 Q4 8.5 0.5 8.5Z" fill="#a09080" opacity="0.8"/><ellipse cx="12.5" cy="5.5" rx="5.5" ry="2.4" fill="#28b838"/><path d="M7.5 5 Q12 2 17.5 4.5" stroke="#111" stroke-width="1.3" fill="none"/><circle cx="9.5" cy="5.3" r="0.8" fill="#c02020"/></svg><svg class="a" style="left:573px;top:417.5px" width="19" height="11" viewBox="0 0 19 11"><path d="M0.5 8.5 Q3 5 7.5 5.5 L8 8 Q4 8.5 0.5 8.5Z" fill="#a09080" opacity="0.8"/><ellipse cx="12.5" cy="5.5" rx="5.5" ry="2.4" fill="#28b838"/><path d="M7.5 5 Q12 2 17.5 4.5" stroke="#111" stroke-width="1.3" fill="none"/><circle cx="9.5" cy="5.3" r="0.8" fill="#c02020"/></svg><svg class="a" style="left:573px;top:397px" width="12" height="12" viewBox="0 0 12 12"><circle cx="6" cy="6" r="5.5" fill="#f7b820"/><path d="M3 4.5 H5 M7 4.5 H9 M3.5 8.5 Q6 7 8.5 8.5" stroke="#6a4a00" stroke-width="0.8" fill="none"/><path d="M3 6 V8 M9 6 V8" stroke="#3a8ae0" stroke-width="0.7"/></svg><svg class="a" style="left:574px;top:407.5px" width="11" height="11" viewBox="0 0 11 11"><circle cx="5.5" cy="5.5" r="5" fill="#e4e8ee" stroke="#8a9aaa" stroke-width="0.8"/><path d="M5.5 2 V5.5 L8 7" stroke="#444" stroke-width="0.6" fill="none"/></svg><svg class="a" style="left:574.5px;top:427.5px" width="9" height="10" viewBox="0 0 9 10"><path d="M4.5 0.5 L8.5 4.5 H6.3 V9.5 H2.7 V4.5 H0.5Z" fill="#d84030" stroke="#8a1a10" stroke-width="0.5"/></svg><svg class="a" style="left:574.5px;top:438px" width="9" height="10" viewBox="0 0 9 10"><path d="M4.5 0.5 L8.5 4.5 H6.3 V9.5 H2.7 V4.5 H0.5Z" fill="#d84030" stroke="#8a1a10" stroke-width="0.5"/></svg><div class="a wood" style="left:383px;top:167px;width:234px;height:207.5px;box-shadow:0 0 0 0.6px rgba(60,15,0,.6), 1px 2px 3px rgba(0,0,0,.5)"></div><div class="a" style="left:393.5px;top:170.5px;white-space:nowrap;font-size:7.5px;line-height:8px;color:#eee;text-shadow:0 0 1px #333">Редкий улов</div><div class="a " style="left:603.4px;top:170.6px;width:10.9px;height:9.8px;background:#333"></div><svg class="a" style="left:603.4px;top:170.6px" width="11" height="10" viewBox="0 0 11 10"><path d="M2.5 2 L8.5 8 M8.5 2 L2.5 8" stroke="#eee" stroke-width="1.2"/></svg><div class="a " style="left:391px;top:185.5px;width:218.2px;height:181.8px;background:#f2f0e0;box-shadow:0 0 0 1px #7a1606, inset 1px 1px 1px rgba(0,0,0,.12)"></div><div class="a" style="left:404px;top:298.4px;white-space:nowrap;font-size:9.2px;line-height:11px;color:#111;font-weight:bold">Вы поймали коралл!</div><div class="a" style="left:408px;top:323.5px;white-space:nowrap;font-size:7.75px;line-height:8.3px;color:#333">Соберите всю коллекцию кораллов и получите<br>награду.</div><svg class="a" style="left:435px;top:190px" width="120" height="100" viewBox="0 0 120 100"><path d="M51.5 42.6 L67.5 35.5 L79.9 26.6 L88.8 21.3" stroke="#120504" stroke-width="9.5" fill="none" stroke-linecap="round" stroke-linejoin="round"/><path d="M79.9 26.6 L83.5 15.1" stroke="#120504" stroke-width="10" fill="none" stroke-linecap="round" stroke-linejoin="round"/><path d="M85.3 23.1 L94.1 13.3" stroke="#120504" stroke-width="10" fill="none" stroke-linecap="round" stroke-linejoin="round"/><path d="M88.8 22.2 L103.0 24.9" stroke="#120504" stroke-width="10" fill="none" stroke-linecap="round" stroke-linejoin="round"/><path d="M88.8 24.9 L101.2 33.7" stroke="#120504" stroke-width="10" fill="none" stroke-linecap="round" stroke-linejoin="round"/><path d="M76.4 30.2 L74.6 20.4" stroke="#120504" stroke-width="10" fill="none" stroke-linecap="round" stroke-linejoin="round"/><path d="M74.6 32.0 L85.3 39.1" stroke="#120504" stroke-width="10" fill="none" stroke-linecap="round" stroke-linejoin="round"/><path d="M58.6 40.9 L53.3 29.3" stroke="#120504" stroke-width="10" fill="none" stroke-linecap="round" stroke-linejoin="round"/><path d="M63.9 37.3 L65.7 26.6" stroke="#120504" stroke-width="10" fill="none" stroke-linecap="round" stroke-linejoin="round"/><path d="M92.0 18.0 L98.0 17.0" stroke="#120504" stroke-width="10" fill="none" stroke-linecap="round" stroke-linejoin="round"/><path d="M48.0 40.0 L50.0 30.0 L60.0 28.0 L72.0 26.0 L80.0 19.0 L88.0 15.0 L97.0 20.0 L99.0 29.0 L90.0 33.0 L80.0 38.0 L68.0 42.0 L56.0 46.0 Z" fill="#9a2416" stroke="#120504" stroke-width="1.3" stroke-linejoin="round"/><path d="M51.5 42.6 L67.5 35.5 L79.9 26.6 L88.8 21.3" stroke="#9a2416" stroke-width="6.5" fill="none" stroke-linecap="round" stroke-linejoin="round"/><path d="M79.9 26.6 L83.5 15.1" stroke="#9a2416" stroke-width="7" fill="none" stroke-linecap="round" stroke-linejoin="round"/><path d="M85.3 23.1 L94.1 13.3" stroke="#9a2416" stroke-width="7" fill="none" stroke-linecap="round" stroke-linejoin="round"/><path d="M88.8 22.2 L103.0 24.9" stroke="#9a2416" stroke-width="7" fill="none" stroke-linecap="round" stroke-linejoin="round"/><path d="M88.8 24.9 L101.2 33.7" stroke="#9a2416" stroke-width="7" fill="none" stroke-linecap="round" stroke-linejoin="round"/><path d="M76.4 30.2 L74.6 20.4" stroke="#9a2416" stroke-width="7" fill="none" stroke-linecap="round" stroke-linejoin="round"/><path d="M74.6 32.0 L85.3 39.1" stroke="#9a2416" stroke-width="7" fill="none" stroke-linecap="round" stroke-linejoin="round"/><path d="M58.6 40.9 L53.3 29.3" stroke="#9a2416" stroke-width="7" fill="none" stroke-linecap="round" stroke-linejoin="round"/><path d="M63.9 37.3 L65.7 26.6" stroke="#9a2416" stroke-width="7" fill="none" stroke-linecap="round" stroke-linejoin="round"/><path d="M92.0 18.0 L98.0 17.0" stroke="#9a2416" stroke-width="7" fill="none" stroke-linecap="round" stroke-linejoin="round"/><path d="M81.9 20.3 L83.5 15.1" stroke="#d89a88" stroke-width="4.4" fill="none" stroke-linecap="round" opacity="0.85"/><path d="M90.1 17.7 L94.1 13.3" stroke="#d89a88" stroke-width="4.4" fill="none" stroke-linecap="round" opacity="0.85"/><path d="M96.6 23.7 L103.0 24.9" stroke="#d89a88" stroke-width="4.4" fill="none" stroke-linecap="round" opacity="0.85"/><path d="M95.6 29.7 L101.2 33.7" stroke="#d89a88" stroke-width="4.4" fill="none" stroke-linecap="round" opacity="0.85"/><path d="M75.4 24.8 L74.6 20.4" stroke="#d89a88" stroke-width="4.4" fill="none" stroke-linecap="round" opacity="0.85"/><path d="M80.5 35.9 L85.3 39.1" stroke="#d89a88" stroke-width="4.4" fill="none" stroke-linecap="round" opacity="0.85"/><path d="M55.7 34.5 L53.3 29.3" stroke="#d89a88" stroke-width="4.4" fill="none" stroke-linecap="round" opacity="0.85"/><path d="M64.9 31.4 L65.7 26.6" stroke="#d89a88" stroke-width="4.4" fill="none" stroke-linecap="round" opacity="0.85"/><path d="M95.3 17.4 L98.0 17.0" stroke="#d89a88" stroke-width="4.4" fill="none" stroke-linecap="round" opacity="0.85"/><path d="M64.6 54.7 L46.0 47.2 L33.6 44.8" stroke="#120504" stroke-width="10.5" fill="none" stroke-linecap="round" stroke-linejoin="round"/><path d="M36.0 43.5 L28.6 34.8 L23.6 29.8" stroke="#120504" stroke-width="10.2" fill="none" stroke-linecap="round" stroke-linejoin="round"/><path d="M38.5 42.3 L33.6 31.1 L31.7 26.7" stroke="#120504" stroke-width="10.2" fill="none" stroke-linecap="round" stroke-linejoin="round"/><path d="M41.0 42.3 L39.8 31.1 L38.5 26.1" stroke="#120504" stroke-width="10.2" fill="none" stroke-linecap="round" stroke-linejoin="round"/><path d="M44.8 43.5 L49.7 36.0 L54.0 40.4" stroke="#120504" stroke-width="10.2" fill="none" stroke-linecap="round" stroke-linejoin="round"/><path d="M34.8 46.0 L21.1 46.0 L11.8 49.1" stroke="#120504" stroke-width="10.2" fill="none" stroke-linecap="round" stroke-linejoin="round"/><path d="M36.0 49.7 L26.1 55.9 L16.8 60.3" stroke="#120504" stroke-width="10.2" fill="none" stroke-linecap="round" stroke-linejoin="round"/><path d="M41.0 52.2 L31.1 59.7 L24.9 64.6" stroke="#120504" stroke-width="10.2" fill="none" stroke-linecap="round" stroke-linejoin="round"/><path d="M46.0 53.4 L44.8 58.4" stroke="#120504" stroke-width="10.2" fill="none" stroke-linecap="round" stroke-linejoin="round"/><path d="M26.0 34.0 L20.0 37.0" stroke="#120504" stroke-width="10.2" fill="none" stroke-linecap="round" stroke-linejoin="round"/><path d="M22.0 47.0 L17.0 41.0" stroke="#120504" stroke-width="10.2" fill="none" stroke-linecap="round" stroke-linejoin="round"/><path d="M28.0 57.0 L22.0 63.0" stroke="#120504" stroke-width="10.2" fill="none" stroke-linecap="round" stroke-linejoin="round"/><path d="M29.0 45.0 L28.0 36.0 L35.0 31.0 L42.0 33.0 L48.0 39.0 L56.0 47.0 L63.0 54.0 L52.0 55.0 L42.0 55.0 L32.0 57.0 L22.0 53.0 L21.0 46.0 Z" fill="#e02c16" stroke="#120504" stroke-width="1.3" stroke-linejoin="round"/><path d="M64.6 54.7 L46.0 47.2 L33.6 44.8" stroke="#e02c16" stroke-width="7.5" fill="none" stroke-linecap="round" stroke-linejoin="round"/><path d="M36.0 43.5 L28.6 34.8 L23.6 29.8" stroke="#e02c16" stroke-width="7.2" fill="none" stroke-linecap="round" stroke-linejoin="round"/><path d="M38.5 42.3 L33.6 31.1 L31.7 26.7" stroke="#e02c16" stroke-width="7.2" fill="none" stroke-linecap="round" stroke-linejoin="round"/><path d="M41.0 42.3 L39.8 31.1 L38.5 26.1" stroke="#e02c16" stroke-width="7.2" fill="none" stroke-linecap="round" stroke-linejoin="round"/><path d="M44.8 43.5 L49.7 36.0 L54.0 40.4" stroke="#e02c16" stroke-width="7.2" fill="none" stroke-linecap="round" stroke-linejoin="round"/><path d="M34.8 46.0 L21.1 46.0 L11.8 49.1" stroke="#e02c16" stroke-width="7.2" fill="none" stroke-linecap="round" stroke-linejoin="round"/><path d="M36.0 49.7 L26.1 55.9 L16.8 60.3" stroke="#e02c16" stroke-width="7.2" fill="none" stroke-linecap="round" stroke-linejoin="round"/><path d="M41.0 52.2 L31.1 59.7 L24.9 64.6" stroke="#e02c16" stroke-width="7.2" fill="none" stroke-linecap="round" stroke-linejoin="round"/><path d="M46.0 53.4 L44.8 58.4" stroke="#e02c16" stroke-width="7.2" fill="none" stroke-linecap="round" stroke-linejoin="round"/><path d="M26.0 34.0 L20.0 37.0" stroke="#e02c16" stroke-width="7.2" fill="none" stroke-linecap="round" stroke-linejoin="round"/><path d="M22.0 47.0 L17.0 41.0" stroke="#e02c16" stroke-width="7.2" fill="none" stroke-linecap="round" stroke-linejoin="round"/><path d="M28.0 57.0 L22.0 63.0" stroke="#e02c16" stroke-width="7.2" fill="none" stroke-linecap="round" stroke-linejoin="round"/><path d="M25.9 32.0 L23.6 29.8" stroke="#f0d0b8" stroke-width="4.6" fill="none" stroke-linecap="round" opacity="0.85"/><path d="M32.6 28.7 L31.7 26.7" stroke="#f0d0b8" stroke-width="4.6" fill="none" stroke-linecap="round" opacity="0.85"/><path d="M39.1 28.4 L38.5 26.1" stroke="#f0d0b8" stroke-width="4.6" fill="none" stroke-linecap="round" opacity="0.85"/><path d="M52.1 38.4 L54.0 40.4" stroke="#f0d0b8" stroke-width="4.6" fill="none" stroke-linecap="round" opacity="0.85"/><path d="M16.0 47.7 L11.8 49.1" stroke="#f0d0b8" stroke-width="4.6" fill="none" stroke-linecap="round" opacity="0.85"/><path d="M21.0 58.3 L16.8 60.3" stroke="#f0d0b8" stroke-width="4.6" fill="none" stroke-linecap="round" opacity="0.85"/><path d="M27.7 62.4 L24.9 64.6" stroke="#f0d0b8" stroke-width="4.6" fill="none" stroke-linecap="round" opacity="0.85"/><path d="M45.3 56.1 L44.8 58.4" stroke="#f0d0b8" stroke-width="4.6" fill="none" stroke-linecap="round" opacity="0.85"/><path d="M22.7 35.6 L20.0 37.0" stroke="#f0d0b8" stroke-width="4.6" fill="none" stroke-linecap="round" opacity="0.85"/><path d="M19.2 43.7 L17.0 41.0" stroke="#f0d0b8" stroke-width="4.6" fill="none" stroke-linecap="round" opacity="0.85"/><path d="M24.7 60.3 L22.0 63.0" stroke="#f0d0b8" stroke-width="4.6" fill="none" stroke-linecap="round" opacity="0.85"/><path d="M53.3 53.3 L67.5 58.6 L74.6 69.3 L79.0 81.7 L82.6 89.7" stroke="#120504" stroke-width="12" fill="none" stroke-linecap="round" stroke-linejoin="round"/><path d="M51.5 58.6 L40.9 63.9" stroke="#120504" stroke-width="10.6" fill="none" stroke-linecap="round" stroke-linejoin="round"/><path d="M69.3 56.8 L81.7 49.7 L92.4 51.5" stroke="#120504" stroke-width="10.6" fill="none" stroke-linecap="round" stroke-linejoin="round"/><path d="M72.8 62.2 L85.3 58.6 L97.7 59.5" stroke="#120504" stroke-width="10.6" fill="none" stroke-linecap="round" stroke-linejoin="round"/><path d="M76.4 69.3 L88.8 67.5 L96.8 69.3" stroke="#120504" stroke-width="10.6" fill="none" stroke-linecap="round" stroke-linejoin="round"/><path d="M79.0 76.4 L90.6 74.6 L94.1 76.4" stroke="#120504" stroke-width="10.6" fill="none" stroke-linecap="round" stroke-linejoin="round"/><path d="M81.7 83.5 L95.9 83.5 L106.6 82.6" stroke="#120504" stroke-width="10.6" fill="none" stroke-linecap="round" stroke-linejoin="round"/><path d="M60.4 63.9 L58.6 71.0" stroke="#120504" stroke-width="10.6" fill="none" stroke-linecap="round" stroke-linejoin="round"/><path d="M67.5 67.5 L65.7 74.6" stroke="#120504" stroke-width="10.6" fill="none" stroke-linecap="round" stroke-linejoin="round"/><path d="M82.0 88.0 L76.0 92.0" stroke="#120504" stroke-width="10.6" fill="none" stroke-linecap="round" stroke-linejoin="round"/><path d="M46.0 58.0 L54.0 51.0 L66.0 53.0 L77.0 55.0 L87.0 55.0 L91.0 62.0 L89.0 72.0 L93.0 82.0 L85.0 89.0 L78.0 89.0 L72.0 77.0 L66.0 67.0 L56.0 63.0 Z" fill="#e0200f" stroke="#120504" stroke-width="1.3" stroke-linejoin="round"/><path d="M53.3 53.3 L67.5 58.6 L74.6 69.3 L79.0 81.7 L82.6 89.7" stroke="#e0200f" stroke-width="9" fill="none" stroke-linecap="round" stroke-linejoin="round"/><path d="M51.5 58.6 L40.9 63.9" stroke="#e0200f" stroke-width="7.6" fill="none" stroke-linecap="round" stroke-linejoin="round"/><path d="M69.3 56.8 L81.7 49.7 L92.4 51.5" stroke="#e0200f" stroke-width="7.6" fill="none" stroke-linecap="round" stroke-linejoin="round"/><path d="M72.8 62.2 L85.3 58.6 L97.7 59.5" stroke="#e0200f" stroke-width="7.6" fill="none" stroke-linecap="round" stroke-linejoin="round"/><path d="M76.4 69.3 L88.8 67.5 L96.8 69.3" stroke="#e0200f" stroke-width="7.6" fill="none" stroke-linecap="round" stroke-linejoin="round"/><path d="M79.0 76.4 L90.6 74.6 L94.1 76.4" stroke="#e0200f" stroke-width="7.6" fill="none" stroke-linecap="round" stroke-linejoin="round"/><path d="M81.7 83.5 L95.9 83.5 L106.6 82.6" stroke="#e0200f" stroke-width="7.6" fill="none" stroke-linecap="round" stroke-linejoin="round"/><path d="M60.4 63.9 L58.6 71.0" stroke="#e0200f" stroke-width="7.6" fill="none" stroke-linecap="round" stroke-linejoin="round"/><path d="M67.5 67.5 L65.7 74.6" stroke="#e0200f" stroke-width="7.6" fill="none" stroke-linecap="round" stroke-linejoin="round"/><path d="M82.0 88.0 L76.0 92.0" stroke="#e0200f" stroke-width="7.6" fill="none" stroke-linecap="round" stroke-linejoin="round"/><path d="M45.7 61.5 L40.9 63.9" stroke="#e8281a" stroke-width="5.0" fill="none" stroke-linecap="round" opacity="0.85"/><path d="M87.6 50.7 L92.4 51.5" stroke="#e8281a" stroke-width="5.0" fill="none" stroke-linecap="round" opacity="0.85"/><path d="M92.1 59.1 L97.7 59.5" stroke="#e8281a" stroke-width="5.0" fill="none" stroke-linecap="round" opacity="0.85"/><path d="M93.2 68.5 L96.8 69.3" stroke="#e8281a" stroke-width="5.0" fill="none" stroke-linecap="round" opacity="0.85"/><path d="M92.5 75.6 L94.1 76.4" stroke="#e8281a" stroke-width="5.0" fill="none" stroke-linecap="round" opacity="0.85"/><path d="M101.8 83.0 L106.6 82.6" stroke="#e8281a" stroke-width="5.0" fill="none" stroke-linecap="round" opacity="0.85"/><path d="M59.4 67.8 L58.6 71.0" stroke="#e8281a" stroke-width="5.0" fill="none" stroke-linecap="round" opacity="0.85"/><path d="M66.5 71.4 L65.7 74.6" stroke="#e8281a" stroke-width="5.0" fill="none" stroke-linecap="round" opacity="0.85"/><path d="M78.7 90.2 L76.0 92.0" stroke="#e8281a" stroke-width="5.0" fill="none" stroke-linecap="round" opacity="0.85"/><ellipse cx="53.5" cy="48.5" rx="4.2" ry="3.2" fill="#e6c4a4" stroke="#120504" stroke-width="0.8" transform="rotate(25 53.5 48.5)"/><path d="M70 62 Q76 72 79 84" stroke="#6a0806" stroke-width="1.2" fill="none" opacity="0.7"/></svg>
</body></html>
